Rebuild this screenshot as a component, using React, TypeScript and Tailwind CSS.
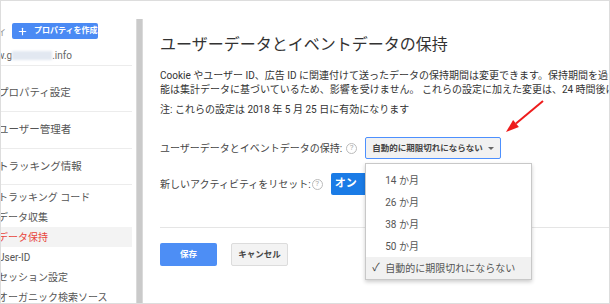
import { Plus } from 'lucide-react';

const font = "font-['Roboto','Noto_Sans_CJK_JP',sans-serif]";

const Help = () => (
  <span className="w-[11px] h-[11px] rounded-full border border-[#bbb] text-[#aaa] text-[8px] leading-none flex items-center justify-center shrink-0">
    ?
  </span>
);

const subItems = ['トラッキング コード', 'データ収集', 'データ保持', 'User-ID', 'セッション設定', 'オーガニック検索ソース'];

const menuItems = ['14 か月', '26 か月', '38 か月', '50 か月', '自動的に期限切れにならない'];

const Sidebar = () => (
  <div className="w-[135px] shrink-0 pr-[4px] overflow-hidden text-[#555] text-[10px]">
    <div className="pt-[22px] flex items-center">
      <span className="w-[10px] ml-[-4px] text-[#999] text-right">ィ</span>
      <div className="ml-[5px] h-[16px] w-[86px] bg-[#4a8af4] rounded-[2px] flex items-center text-white font-bold text-[8px] whitespace-nowrap">
        <Plus size={11} strokeWidth={2.5} className="ml-[5px] mr-[6px] shrink-0" />
        プロパティを作成
      </div>
    </div>
    <div className="mt-[9px] h-[14px] flex items-center ml-[-4px] text-[#666]">
      <span>w.g</span>
      <span className="w-[40px] h-[9px] bg-[#e2e8f1] blur-[1px]" />
      <span>.info</span>
    </div>
    <div className="mt-[3px] h-px bg-[#ececec]" />
    <div className="h-[45px] pt-[17px] ml-[-3px] leading-[20px] text-[10.5px] whitespace-nowrap">プロパティ設定</div>
    <div className="h-px bg-[#ececec]" />
    <div className="h-[36px] flex items-center ml-[-3px] text-[10.5px] whitespace-nowrap">ユーザー管理者</div>
    <div className="h-px bg-[#ececec]" />
    <div className="h-[35px] flex items-center ml-[-3px] text-[10.5px] whitespace-nowrap">トラッキング情報</div>
    <div className="h-px bg-[#ececec]" />
    <div className="pt-[2px]">
      {subItems.map(item => (
        <div
          key={item}
          className={`h-[20px] flex items-center ${item === 'データ保持' ? 'bg-[#f3f3f3] text-[#e8453c]' : ''}`}
        >
          <span className="ml-[-3px] whitespace-nowrap">{item}</span>
        </div>
      ))}
    </div>
  </div>
);

const App = () => {
  return (
    <div className={`${font} w-[610px] h-[304px] border border-[#ddd] bg-white overflow-hidden flex relative`}>
      <Sidebar />

      <div className="flex-1 min-w-0 pt-[18px] flex">
        <div className="w-[7px] shrink-0 bg-[#cacaca] border-x border-[#dadada]" />

        <div className="flex-1 min-w-0 pl-[17px] overflow-hidden text-[#333]">
          <h1 className="mt-[16px] h-[20px] leading-[20px] text-[16px] text-[#333] whitespace-nowrap">
            ユーザーデータとイベントデータの保持
          </h1>

          <div className="mt-[14px] text-[10px] leading-[14px] whitespace-nowrap">
            <p>Cookie やユーザー ID、広告 ID に関連付けて送ったデータの保持期間は変更できます。保持期間を過ぎたデータは自動的に削除されます。</p>
            <p>能は集計データに基づいているため、影響を受けません。 これらの設定に加えた変更は、24 時間後に適用されます。</p>
          </div>

          <p className="mt-[6px] text-[10px] leading-[14px] whitespace-nowrap">
            注: これらの設定は 2018 年 5 月 25 日に有効になります
          </p>

          <div className="mt-[20px] h-[22px] flex items-center text-[10px] text-[#444]">
            <span className="whitespace-nowrap">ユーザーデータとイベントデータの保持:</span>
            <span className="ml-[4px]"><Help /></span>
            <div className="relative ml-[8px]">
              <div className="w-[136px] h-[22px] bg-[#f1f1f1] border border-[#4d90fe] rounded-[2px] flex items-center pl-[6px] text-[8.5px] font-bold text-[#444]">
                <span className="whitespace-nowrap">自動的に期限切れにならない</span>
                <span className="ml-auto mr-[6px] w-0 h-0 border-x-[3px] border-x-transparent border-t-[3px] border-t-[#666]" />
              </div>
              <div className="absolute z-10 left-0 top-[26px] w-[167px] bg-white border border-[#c8c8c8] shadow-[0_2px_4px_rgba(0,0,0,0.2)] pt-[5px]">
                {menuItems.map((item, i) => (
                  <div
                    key={item}
                    className={`relative h-[22px] flex items-center pl-[19px] text-[10px] text-[#555] whitespace-nowrap ${i === menuItems.length - 1 ? 'bg-[#f1f1f1]' : ''}`}
                  >
                    {i === menuItems.length - 1 && (
                      <span className="absolute left-[6px] text-[#444] text-[11px]">✓</span>
                    )}
                    {item}
                  </div>
                ))}
              </div>
            </div>
          </div>

          <div className="mt-[14px] h-[22px] flex items-center text-[10px] text-[#444]">
            <span className="whitespace-nowrap">新しいアクティビティをリセット:</span>
            <span className="ml-[1px]"><Help /></span>
            <div className="ml-[8px] w-[60px] h-[22px] bg-[#1a7be6] rounded-[2px] flex items-center pl-[4px] text-white text-[11px] font-bold">
              オン
            </div>
          </div>

          <div className="mt-[32px] h-px bg-[#e5e5e5]" />

          <div className="mt-[15px] flex items-center gap-[14px]">
            <button className="w-[57px] h-[23px] bg-[#4d8ef5] rounded-[2px] text-white text-[8.5px] font-bold">保存</button>
            <button className="w-[57px] h-[23px] bg-[#f3f3f3] border border-[#dcdcdc] rounded-[2px] text-[#444] text-[8.5px] font-bold">キャンセル</button>
          </div>
        </div>
      </div>

      <svg className="absolute left-[500px] top-[95px] z-20" width="50" height="40" viewBox="0 0 50 40">
        <line x1="42" y1="5" x2="15" y2="27.6" stroke="#ee1c1c" strokeWidth="2" />
        <polygon points="5,36 17.9,31.1 12.1,24.1" fill="#ee1c1c" />
      </svg>
    </div>
  );
};

export default App;
